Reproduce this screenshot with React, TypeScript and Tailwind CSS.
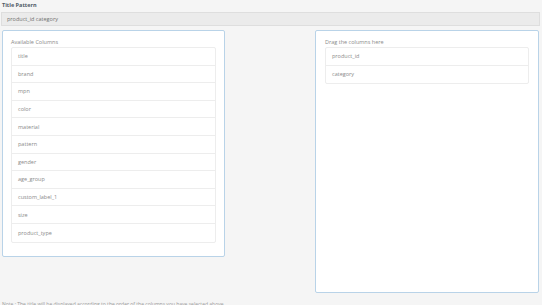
const AVAILABLE = [
  "title",
  "brand",
  "mpn",
  "color",
  "material",
  "pattern",
  "gender",
  "age_group",
  "custom_label_1",
  "size",
  "product_type",
];

const SELECTED = ["product_id", "category"];

function ColumnList({ items }: { items: string[] }) {
  return (
    <div className="border border-[#ededed] rounded-[2px] bg-white">
      {items.map((name, i) => (
        <div
          key={name}
          className={`h-[17.6px] flex items-center px-[6px] text-[5.5px] text-[#8a8a8a] ${
            i < items.length - 1 ? "border-b border-[#ededed]" : ""
          }`}
        >
          {name}
        </div>
      ))}
    </div>
  );
}

export default function App() {
  return (
    <div
      className="w-[542px] h-[305px] overflow-hidden bg-[#f5f5f5]"
      style={{ fontFamily: '"Open Sans", "Liberation Sans", sans-serif' }}
    >
      <div className="pl-[2px] pt-[2px] text-[5.5px] font-bold text-[#4f5b66] leading-[7px]">
        Title Pattern
      </div>
      <div className="mt-[3px] ml-[1px] w-[539px] h-[14px] bg-[#ebebeb] border border-[#dedede] flex items-center pl-[5px] text-[5.5px] text-[#707070]">
        product_id category
      </div>

      <div className="mt-[4px] flex items-start pl-[2px] pr-[3px] justify-between">
        <div className="w-[223px] h-[227px] bg-white border border-[#b9d3e8] rounded-[2px] px-[8px] pt-[8px]">
          <div className="text-[5.5px] text-[#8a8a8a] leading-[7px] mb-[1px]">Available Columns</div>
          <ColumnList items={AVAILABLE} />
        </div>

        <div className="w-[224px] h-[263px] bg-white border border-[#b9d3e8] rounded-[2px] px-[9px] pt-[8px]">
          <div className="text-[5.5px] text-[#8a8a8a] leading-[7px] mb-[1px]">Drag the columns here</div>
          <ColumnList items={SELECTED} />
        </div>
      </div>

      <div className="pl-[2px] mt-[8px] text-[5px] text-[#999] leading-[7px] whitespace-nowrap">
        Note : The title will be displayed according to the order of the columns you have selected above.
      </div>
    </div>
  );
}
